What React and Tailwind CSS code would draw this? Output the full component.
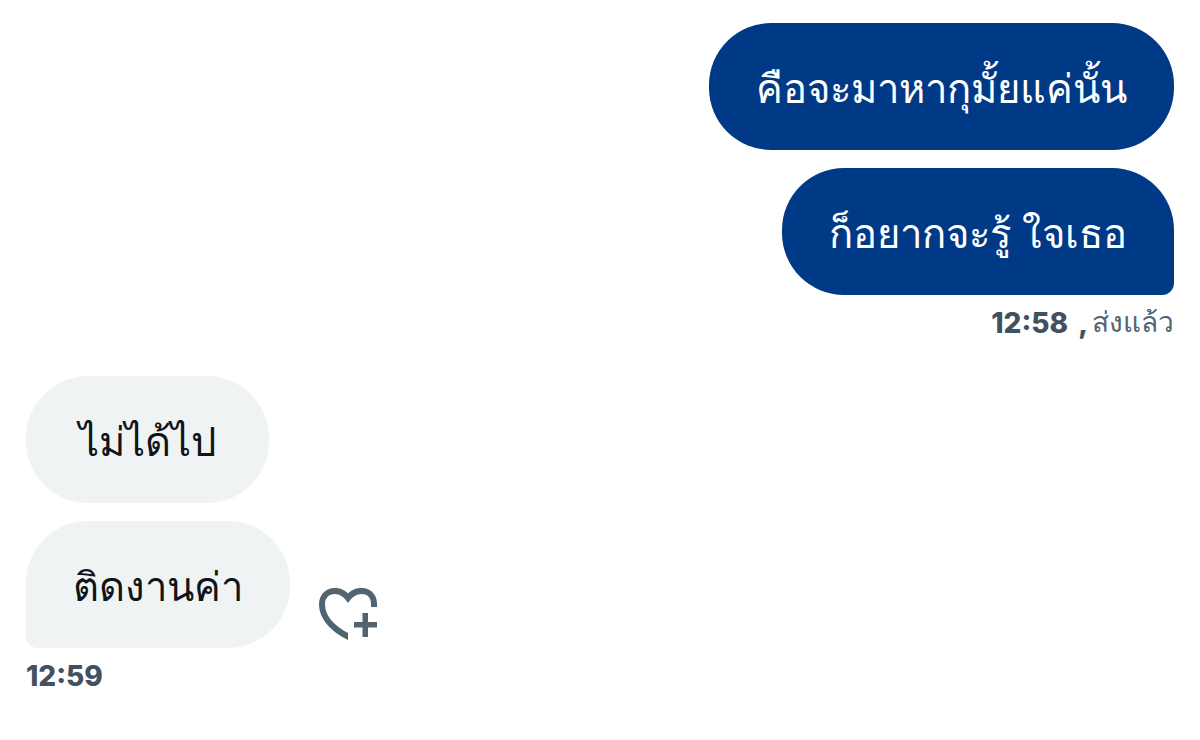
import React from "react";

const sent = [
  { id: 1, text: "คือจะมาหากุมั้ยแค่นั้น", shape: "rounded-[62px]" },
  { id: 2, text: "ก็อยากจะรู้ ใจเธอ", shape: "rounded-[62px] rounded-br-[12px]" },
];

const received = [
  { id: 3, text: "ไม่ได้ไป", shape: "rounded-[62px]" },
  { id: 4, text: "ติดงานค่า", shape: "rounded-[62px] rounded-bl-[12px]", canReact: true },
];

const HeartPlus = () => (
  <svg viewBox="0 0 58 52" className="h-[52px] w-[58px]" fill="#536471" aria-hidden="true">
    <path d="M58 19V15.5C58 6.5 51.5 0 43 0C37 0 32 2 29 5.5C26 2 21 0 15.5 0C6.5 0 0 7 0 16C0 31 12 43.5 29 52V45C14.5 37 6 28 6 16C6 10 10 6 15.5 6C21 6 25 9 29 15C33 9 37.5 6 43 6C48.5 6 52 10 52 15.5V19Z" />
    <path d="M43.5 25H49V34H58V39.5H49V49H43.5V39.5H35V34H43.5Z" />
  </svg>
);

const Bubble = ({ text, className }) => (
  <p
    className={`flex min-h-[127px] min-w-[243px] items-center justify-center px-[47px] pt-1 text-[40px] font-light ${className}`}
  >
    {text}
  </p>
);

const App = () => {
  return (
    <main className="min-h-screen bg-white px-[26px] py-[23px] font-['Liberation_Sans','Noto_Sans',sans-serif]">
      <section className="flex flex-col items-end gap-[18px]">
        {sent.map((m) => (
          <Bubble key={m.id} text={m.text} className={`bg-[#003a87] text-white ${m.shape}`} />
        ))}
      </section>
      <p className="mt-2 flex h-10 items-center justify-end text-[28px] text-[#536471]">
        <time className="font-['Inter'] font-extrabold text-[#42505f]">12:58</time>
        <span className="mr-1 ml-2.5 font-['Inter'] font-extrabold text-[#42505f]">,</span>
        <span className="font-light">ส่งแล้ว</span>
      </p>

      <section className="mt-[33px] flex flex-col items-start gap-[18px]">
        {received.map((m) => (
          <div key={m.id} className="flex items-end gap-[29px]">
            <Bubble text={m.text} className={`bg-[#eff3f4] text-[#0f1419] ${m.shape}`} />
            {m.canReact && (
              <button type="button" aria-label="Add reaction" className="mb-2">
                <HeartPlus />
              </button>
            )}
          </div>
        ))}
      </section>
      <p className="mt-2 text-[28px] leading-10 font-extrabold text-[#42505f]">
        <time className="font-['Inter']">12:59</time>
      </p>
    </main>
  );
};

export default App;
